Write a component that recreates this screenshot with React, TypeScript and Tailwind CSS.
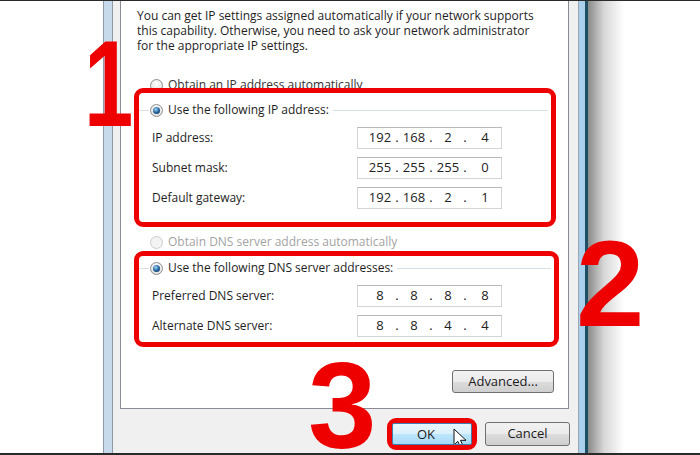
import React from "react";

const ui = "font-['Open_Sans',sans-serif]";

function Radio({ checked = false, faded = false }: { checked?: boolean; faded?: boolean }) {
  return (
    <span
      className={
        faded
          ? "flex h-[13px] w-[13px] shrink-0 items-center justify-center rounded-full border border-[#cdcdcd] bg-[#f3f3f3]"
          : "flex h-[13px] w-[13px] shrink-0 items-center justify-center rounded-full border border-[#8e8e8e] bg-[radial-gradient(circle_at_50%_35%,#ffffff,#d9d9d9)]"
      }
    >
      {checked && (
        <span className="h-[7px] w-[7px] rounded-full bg-[radial-gradient(circle_at_40%_35%,#9ad6f7,#1f5d98_55%,#0b2748)]" />
      )}
    </span>
  );
}

function IpField({ parts }: { parts: string[] }) {
  return (
    <div className="flex h-[22px] w-[145px] shrink-0 items-center border border-[#d4d4d4] border-t-[#b9b9b9] bg-white pl-[7px] text-[13px] text-[#222]">
      {parts.map((p, i) => (
        <React.Fragment key={i}>
          {i > 0 && <span className="w-[4px] text-center">.</span>}
          {i < 3 ? (
            <span className="w-[30px] text-center">{p}</span>
          ) : (
            <span className="w-[32px] pl-[4px] text-center">{p}</span>
          )}
        </React.Fragment>
      ))}
    </div>
  );
}

function FieldRow({ label, parts }: { label: string; parts: string[] }) {
  return (
    <div className="flex items-center pl-[13px]">
      <span className="w-[205px] text-[12px] text-[#1e1e1e]">{label}</span>
      <IpField parts={parts} />
    </div>
  );
}

function GroupHeader({ label }: { label: string }) {
  return (
    <div className="flex h-[16px] items-center pr-[3px]">
      <span className="h-px w-[10px] bg-[#d5dfe5]" />
      <span className="ml-[1px]">
        <Radio checked />
      </span>
      <span className="ml-[5px] mr-[4px] text-[12px] text-[#1e1e1e]">{label}</span>
      <span className="h-px flex-1 bg-[#d5dfe5]" />
    </div>
  );
}

function Cursor() {
  return (
    <svg className="absolute left-[60px] top-[4px]" width="15" height="22" viewBox="0 0 15 22">
      <path d="M1 1 L1 17 L4.8 13.3 L8 20 L10.6 18.9 L7.5 12.3 L13 12.3 Z" fill="#ffffff" stroke="#111" strokeWidth="1" strokeLinejoin="round" />
    </svg>
  );
}

export default function App() {
  return (
    <div className={`relative flex h-[455px] w-[700px] flex-col overflow-hidden bg-white ${ui}`}>
      <div className="h-px bg-[#2a2a2a]" />
      <div className="flex flex-1">
        <div className="w-[103px] shrink-0 bg-white" />
        {/* left window frame */}
        <div className="w-[10px] shrink-0 border-x border-[#8e9ba7] bg-[#c6daec]" />
        {/* dialog body */}
        <div className="flex w-[465px] shrink-0 flex-col bg-[#f0f0f0]">
          <div className="ml-[7px] mr-[9px] flex h-[408px] flex-col border-x border-b border-[#898c95] bg-white">
            <p className="pl-[16px] pt-[7px] text-[12px] leading-[15px] text-[#1e1e1e]">
              You can get IP settings assigned automatically if your network supports
              <br />
              this capability. Otherwise, you need to ask your network administrator
              <br />
              for the appropriate IP settings.
            </p>

            <div className="mt-[24px] flex h-[16px] items-center gap-[5px] pl-[29px] text-[12px] text-[#333]">
              <Radio />
              <span>Obtain an IP address automatically</span>
            </div>

            <div className="relative z-10 -mt-[5px] ml-[13px] w-[422px] rounded-[9px] border-[5px] border-[#ee0000] pb-[13px] pt-[9px]">
              <GroupHeader label="Use the following IP address:" />
              <div className="mt-[9px] flex flex-col gap-[8px]">
                <FieldRow label="IP address:" parts={["192", "168", "2", "4"]} />
                <FieldRow label="Subnet mask:" parts={["255", "255", "255", "0"]} />
                <FieldRow label="Default gateway:" parts={["192", "168", "2", "1"]} />
              </div>
            </div>

            <div className="mt-[7px] flex h-[16px] items-center gap-[5px] pl-[29px] text-[12px] text-[#a3a3a3]">
              <Radio faded />
              <span>Obtain DNS server address automatically</span>
            </div>

            <div className="mt-[1px] ml-[13px] w-[425px] rounded-[9px] border-[5px] border-[#ee0000] pb-[5px] pt-[4px]">
              <GroupHeader label="Use the following DNS server addresses:" />
              <div className="mt-[9px] flex flex-col gap-[8px]">
                <FieldRow label="Preferred DNS server:" parts={["8", "8", "8", "8"]} />
                <FieldRow label="Alternate DNS server:" parts={["8", "8", "4", "4"]} />
              </div>
            </div>

            <div className="mr-[14px] mt-[23px] flex justify-end">
              <button className="h-[23px] w-[102px] rounded-[3px] border border-[#707070] bg-[linear-gradient(#f2f2f2,#ebebeb_50%,#dddddd_50%,#cfcfcf)] text-[13px] text-[#1a1a1a]">
                Advanced...
              </button>
            </div>
          </div>

          <div className="flex flex-1 items-center justify-end gap-[8px] pr-[8px] pt-[5px]">
            <div className="relative rounded-[9px] border-[5px] border-[#ee0000]">
              <div className="relative h-[22px] w-[80px] overflow-hidden rounded-[2px] border border-[#3c7fb1] bg-[linear-gradient(#eaf6fd,#d9f0fc_50%,#bee6fd_50%,#a7d9f5)]">
                <span className="absolute left-[24px] top-[1px] text-[13px] text-[#1a1a1a]">OK</span>
                <Cursor />
              </div>
            </div>
            <button className="h-[24px] w-[85px] rounded-[3px] border border-[#707070] bg-[linear-gradient(#f2f2f2,#ebebeb_50%,#dddddd_50%,#cfcfcf)] text-[13px] text-[#1a1a1a]">
              Cancel
            </button>
          </div>
        </div>
        {/* right window frame */}
        <div className="flex w-[10px] shrink-0">
          <div className="w-px bg-[#9aa6b0]" />
          <div className="w-[6px] bg-[#aad0ee]" />
          <div className="w-[3px] bg-[#1e4f63]" />
        </div>
        <div className="w-[36px] shrink-0 bg-[linear-gradient(to_right,#8a8a8a,#d8d8d8_45%,#ffffff)]" />
        <div className="flex-1 bg-white" />
      </div>
      <div className="h-[2px] bg-[#2a2a2a]" />

      {/* annotation numbers */}
      <span className="pointer-events-none absolute left-[84px] top-[22px] z-20 origin-left scale-x-[0.72] font-['Liberation_Sans',Arial,sans-serif] text-[123px] font-bold leading-none text-[#ee0000]">
        1
      </span>
      <span className="pointer-events-none absolute left-[576px] top-[222px] z-20 font-['Liberation_Sans',Arial,sans-serif] text-[123px] font-bold leading-none text-[#ee0000]">
        2
      </span>
      <span className="pointer-events-none absolute left-[308px] top-[344px] z-20 font-['Liberation_Sans',Arial,sans-serif] text-[123px] font-bold leading-none text-[#ee0000]">
        3
      </span>
    </div>
  );
}
